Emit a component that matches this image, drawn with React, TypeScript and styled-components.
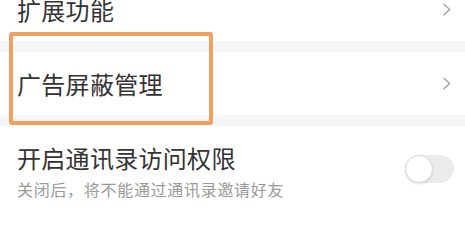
import React from "react";
import styled, { createGlobalStyle } from "styled-components";

const GlobalStyle = createGlobalStyle`
  html, body {
    margin: 0;
    padding: 0;
    background: #ffffff;
  }
  body {
    font-family: "Noto Sans CJK SC", "Noto Sans", sans-serif;
    overflow: hidden;
  }
`;

const Page = styled.div`
  position: relative;
  width: 465px;
  height: 201px;
  overflow: hidden;
  background: #ffffff;
`;

const List = styled.div`
  display: flex;
  flex-direction: column;
  margin-top: -22px;
`;

const Row = styled.div`
  display: flex;
  align-items: center;
  justify-content: space-between;
  height: 63px;
  padding: 0 13px 0 17px;
  box-sizing: border-box;
`;

const SwitchRow = styled(Row)`
  height: auto;
  padding: 17px 11px 0 17px;
  align-items: center;
`;

const Divider = styled.div`
  height: 11px;
  background: #f6f6f6;
`;

const TextBlock = styled.div`
  display: flex;
  flex-direction: column;
  gap: 6px;
`;

const Title = styled.span`
  font-size: 24px;
  line-height: 30px;
  color: #333333;
  letter-spacing: 0.3px;
`;

const Subtitle = styled.span`
  font-size: 16px;
  line-height: 20px;
  color: #9a9a9a;
  letter-spacing: 0.7px;
`;

const Chevron = styled.svg`
  width: 10px;
  height: 13px;
  display: block;
`;

const Track = styled.div<{ $on?: boolean }>`
  position: relative;
  width: 49px;
  height: 28px;
  border-radius: 14px;
  background: ${(p) => (p.$on ? "#f19e5b" : "#ebebeb")};
  margin-top: -4px;
`;

const Knob = styled.div`
  position: absolute;
  top: 0;
  left: 0;
  width: 28px;
  height: 28px;
  border-radius: 50%;
  background: #ffffff;
  box-sizing: border-box;
  border: 1px solid #dcdcdc;
  box-shadow: 0 1px 2px rgba(0, 0, 0, 0.12);
`;

const Highlight = styled.div`
  position: absolute;
  left: 9px;
  top: 32px;
  width: 204px;
  height: 93px;
  box-sizing: border-box;
  border: 4px solid #f2a05f;
  border-radius: 3px;
  pointer-events: none;
`;

const Arrow = () => (
  <Chevron viewBox="0 0 10 13">
    <path
      d="M2 1.2 L7.6 6.5 L2 11.8"
      fill="none"
      stroke="#a3a3a3"
      strokeWidth="1.5"
      strokeLinecap="round"
      strokeLinejoin="round"
    />
  </Chevron>
);

export default function App() {
  return (
    <>
      <GlobalStyle />
      <Page>
        <List>
          <Row>
            <Title>扩展功能</Title>
            <Arrow />
          </Row>
          <Divider />
          <Row>
            <Title>广告屏蔽管理</Title>
            <Arrow />
          </Row>
          <Divider />
          <SwitchRow>
            <TextBlock>
              <Title>开启通讯录访问权限</Title>
              <Subtitle>关闭后，将不能通过通讯录邀请好友</Subtitle>
            </TextBlock>
            <Track>
              <Knob />
            </Track>
          </SwitchRow>
        </List>
        <Highlight />
      </Page>
    </>
  );
}
